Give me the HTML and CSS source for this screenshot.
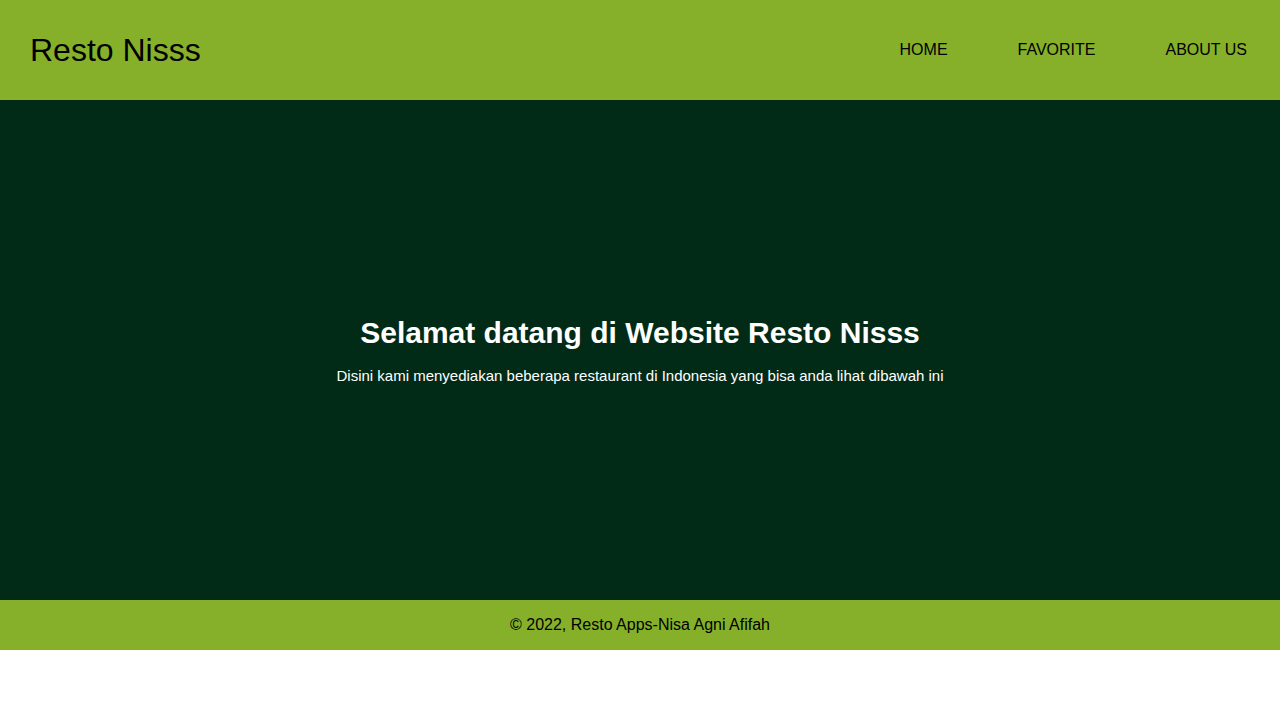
FILE: index.html
```html
<!DOCTYPE html>
<html lang="id">
<head>
<meta charset="utf-8">
<title>Resto Nisss</title>
<link rel="stylesheet" href="styles.css">
</head>
<body>
<header class="app-bar">
  <h1 class="app-bar__brand">Resto Nisss</h1>
  <nav class="app-bar__nav">
    <a href="#" class="nav-link">HOME</a>
    <a href="#" class="nav-link">FAVORITE</a>
    <a href="#" class="nav-link">ABOUT US</a>
  </nav>
</header>
<main>
  <section class="hero">
    <h2 class="hero__title">Selamat datang di Website Resto Nisss</h2>
    <p class="hero__text">Disini kami menyediakan beberapa restaurant di Indonesia yang bisa anda lihat dibawah ini</p>
  </section>
</main>
<footer class="footer">
  <p class="footer__text">© 2022, Resto Apps-Nisa Agni Afifah</p>
</footer>
</body>
</html>
```
FILE: styles.css
```css
* { box-sizing: border-box; }
body {
  margin: 0;
  font-family: "Liberation Sans", Arial, sans-serif;
  background: #ffffff;
  color: #000;
}
.app-bar {
  height: 100px;
  background: #86b02a;
  display: flex;
  align-items: center;
  justify-content: space-between;
  padding: 0 33px 0 30px;
}
.app-bar__brand {
  margin: 0;
  font-size: 32px;
  font-weight: normal;
}
.app-bar__nav {
  display: flex;
  gap: 70px;
}
.nav-link {
  color: #000;
  text-decoration: none;
  font-size: 16px;
}
.hero {
  height: 500px;
  background: #022b17;
  color: #fff;
  display: flex;
  flex-direction: column;
  align-items: center;
  justify-content: center;
  text-align: center;
}
.hero__title {
  margin: 0;
  font-size: 30px;
  font-weight: bold;
}
.hero__text {
  margin: 17px 0 0;
  font-size: 15px;
}
.footer {
  height: 50px;
  background: #86b02a;
  display: flex;
  align-items: center;
  justify-content: center;
}
.footer__text {
  margin: 0;
  font-size: 16px;
}
```
